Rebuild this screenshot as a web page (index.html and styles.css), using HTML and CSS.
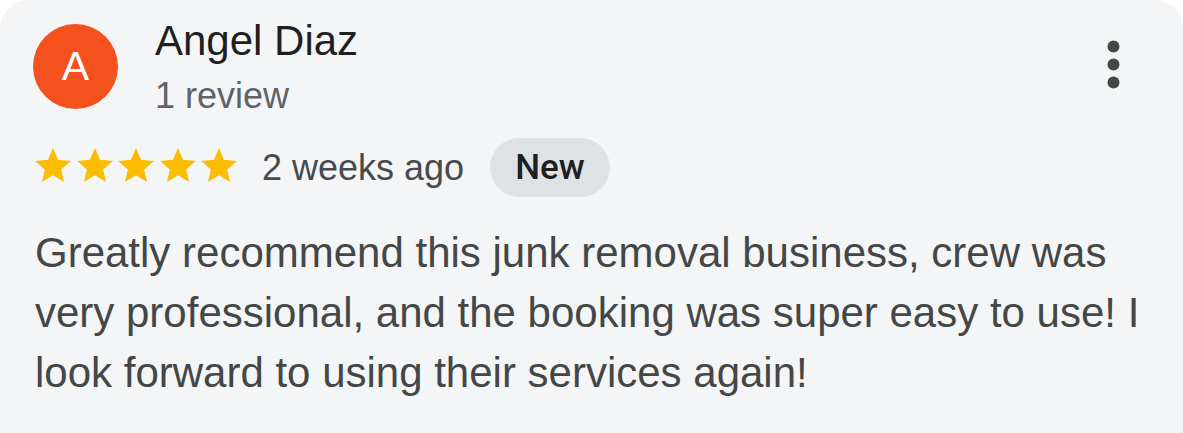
FILE: index.html
```html
<!DOCTYPE html>
<html lang="en">
<head>
    <meta charset="UTF-8">
    <meta name="viewport" content="width=device-width, initial-scale=1.0">
    <title>Review</title>
    <link rel="stylesheet" href="styles.css">
</head>
<body>
    <div class="review-card">
        <div class="review-head">
            <div class="avatar">A</div>
            <div class="author">
                <div class="author-name">Angel Diaz</div>
                <div class="author-meta">1 review</div>
            </div>
            <div class="more">
                <svg width="13" height="49" viewBox="0 0 13 49">
                    <circle cx="6.5" cy="6.5" r="6" fill="#444746"/>
                    <circle cx="6.5" cy="24.5" r="6" fill="#444746"/>
                    <circle cx="6.5" cy="42.5" r="6" fill="#444746"/>
                </svg>
            </div>
        </div>
        <div class="review-meta">
            <div class="stars">
                <svg class="star" viewBox="2 2 20 19"><path d="M12 17.27L18.18 21l-1.64-7.03L22 9.24l-7.19-.61L12 2 9.19 8.63 2 9.24l5.46 4.73L5.82 21z"/></svg>
                <svg class="star" viewBox="2 2 20 19"><path d="M12 17.27L18.18 21l-1.64-7.03L22 9.24l-7.19-.61L12 2 9.19 8.63 2 9.24l5.46 4.73L5.82 21z"/></svg>
                <svg class="star" viewBox="2 2 20 19"><path d="M12 17.27L18.18 21l-1.64-7.03L22 9.24l-7.19-.61L12 2 9.19 8.63 2 9.24l5.46 4.73L5.82 21z"/></svg>
                <svg class="star" viewBox="2 2 20 19"><path d="M12 17.27L18.18 21l-1.64-7.03L22 9.24l-7.19-.61L12 2 9.19 8.63 2 9.24l5.46 4.73L5.82 21z"/></svg>
                <svg class="star" viewBox="2 2 20 19"><path d="M12 17.27L18.18 21l-1.64-7.03L22 9.24l-7.19-.61L12 2 9.19 8.63 2 9.24l5.46 4.73L5.82 21z"/></svg>
            </div>
            <span class="review-date">2 weeks ago</span>
            <span class="badge">New</span>
        </div>
        <p class="review-text">Greatly recommend this junk removal business, crew was very professional, and the booking was super easy to use! I look forward to using their services again!</p>
    </div>
</body>
</html>
```

FILE: styles.css
```css
body {
    font-family: 'Liberation Sans', Arial, sans-serif;
    background-color: #fff;
    margin: 0;
    padding: 0;
}
.review-card {
    background-color: #f4f5f7;
    border-radius: 28px 28px 0 0;
    padding: 17px 30px 40px 34px;
    min-height: 376px;
}
.review-head {
    display: flex;
    align-items: flex-start;
}
.avatar {
    width: 85px;
    height: 85px;
    margin-top: 7px;
    margin-left: -1px;
    border-radius: 50%;
    background-color: #f4511e;
    color: #fff;
    font-size: 41px;
    line-height: 85px;
    text-align: center;
    flex-shrink: 0;
}
.author {
    margin-left: 37px;
}
.author-name {
    font-size: 42px;
    line-height: 48px;
    color: #1f1f1f;
}
.author-meta {
    font-size: 36px;
    line-height: 44px;
    color: #5f6368;
    margin-top: 9px;
}
.more {
    margin-left: auto;
    margin-top: 23px;
    margin-right: 33px;
    display: flex;
}
.review-meta {
    display: flex;
    align-items: center;
    height: 59px;
    margin-top: 20px;
}
.stars {
    display: flex;
    gap: 5.5px;
    margin-left: 1px;
    margin-bottom: 5px;
}
.star {
    width: 36px;
    height: 34px;
    fill: #fbbc04;
}
.review-date {
    font-size: 36px;
    line-height: 59px;
    color: #474a4d;
    margin-left: 25px;
}
.badge {
    margin-left: 26px;
    height: 59px;
    line-height: 59px;
    padding: 0 25px;
    border-radius: 30px;
    background-color: #dfe2e5;
    color: #1f1f1f;
    font-family: Roboto, 'Liberation Sans', sans-serif;
    font-size: 35px;
    font-weight: 500;
}
.review-text {
    margin: 26px 0 0 1px;
    font-size: 42px;
    line-height: 60px;
    color: #444746;
}
```
